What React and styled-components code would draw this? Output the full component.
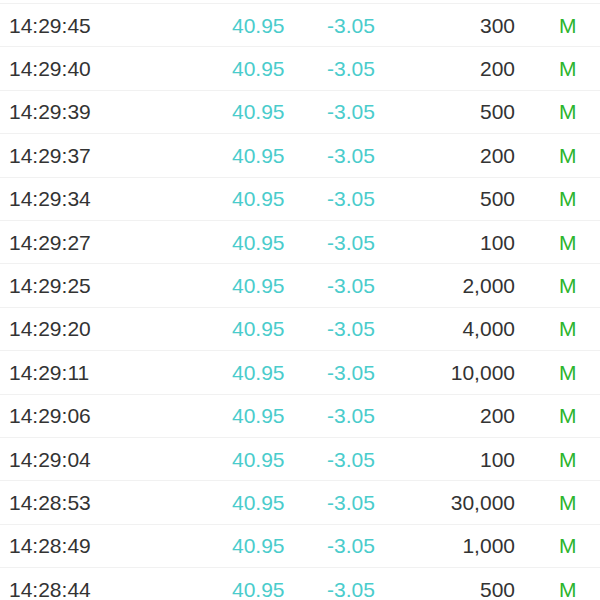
import React from 'react'
import styled, { createGlobalStyle } from 'styled-components'

const GlobalStyle = createGlobalStyle`
  html, body {
    margin: 0;
    padding: 0;
    background: #fff;
  }
  body {
    font-family: "Liberation Sans", Arial, sans-serif;
    overflow: hidden;
  }
`

const List = styled.div`
  padding-top: 3px;
  background: #fff;
`

const Row = styled.div`
  display: grid;
  grid-template-columns: 223px 95px 108px 80px 1fr;
  align-items: center;
  height: 43.4px;
  box-sizing: border-box;
  padding-left: 9px;
  border-top: 1.5px solid #f1f1f1;
  font-size: 21px;
  line-height: 1;
`

const Cell = styled.span`
  color: ${p => p.color || '#333'};
  text-align: ${p => (p.right ? 'right' : 'left')};
  padding-left: ${p => p.indent || 0}px;
  white-space: nowrap;
`

const trades = [
  ['14:29:45', '300'],
  ['14:29:40', '200'],
  ['14:29:39', '500'],
  ['14:29:37', '200'],
  ['14:29:34', '500'],
  ['14:29:27', '100'],
  ['14:29:25', '2,000'],
  ['14:29:20', '4,000'],
  ['14:29:11', '10,000'],
  ['14:29:06', '200'],
  ['14:29:04', '100'],
  ['14:28:53', '30,000'],
  ['14:28:49', '1,000'],
  ['14:28:44', '500'],
]

export default function App() {
  return (
    <>
      <GlobalStyle />
      <List>
        {trades.map(([time, vol]) => (
          <Row key={time}>
            <Cell>{time}</Cell>
            <Cell color="#4acccc">40.95</Cell>
            <Cell color="#4acccc">-3.05</Cell>
            <Cell right>{vol}</Cell>
            <Cell color="#2db52d" indent={44}>M</Cell>
          </Row>
        ))}
      </List>
    </>
  )
}
